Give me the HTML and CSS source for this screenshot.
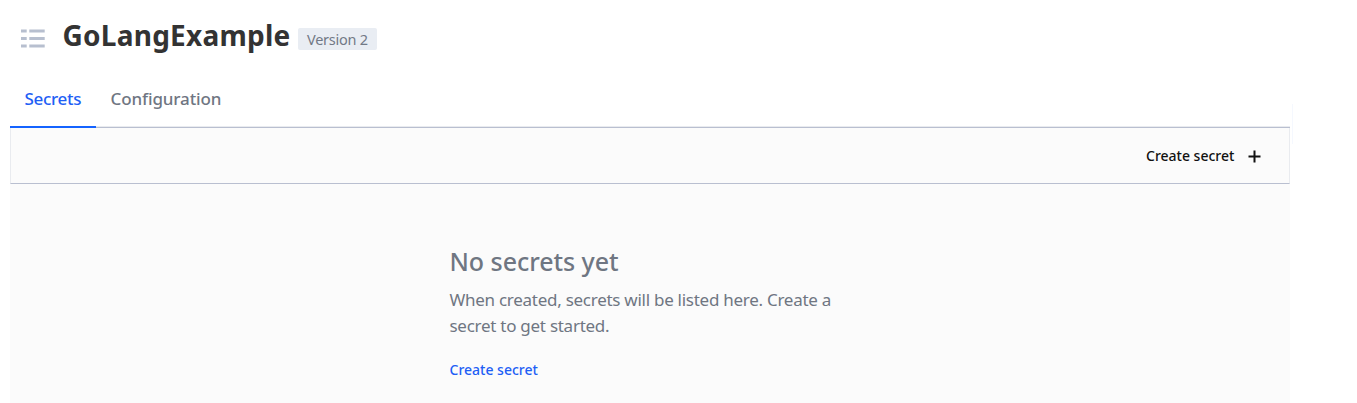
FILE: index.html
```html
<!DOCTYPE html>
<html lang="en">
<head>
<meta charset="utf-8">
<title>GoLangExample</title>
<link rel="stylesheet" href="styles.css">
</head>
<body>
<header class="header">
  <svg class="list-icon" width="24" height="19" viewBox="0 0 24 19" fill="#b7bfcf">
    <path d="M0 .5h5.700v3H0zM8.300 .5H23.700v3H8.300zM0 8h5.700v3H0zM8.300 8H23.700v3H8.300zM0 15.500h5.700v3H0zM8.300 15.500H23.700v3H8.300z"/>
  </svg>
  <h1 class="title">GoLangExample</h1>
  <span class="badge">Version 2</span>
</header>
<nav class="tabs">
  <a class="tab tab-active">Secrets</a>
  <a class="tab">Configuration</a>
  <span class="edge"></span>
</nav>
<main class="panel">
  <div class="toolbar">
    <button class="create"><span class="action">Create secret</span>
      <svg class="plus" width="13" height="13" viewBox="0 0 13 13" stroke="#111" stroke-width="2"><path d="M6.500 .5v12M.5 6.500h12"/></svg>
    </button>
  </div>
  <section class="empty">
    <h2 class="empty-title">No secrets yet</h2>
    <p class="empty-text">When created, secrets will be listed here. Create a<br>secret to get started.</p>
    <a class="link action">Create secret</a>
  </section>
</main>
</body>
</html>
```
FILE: styles.css
```css
* { box-sizing: border-box; }
body { margin: 0; height: 403px; overflow: hidden; background: #fff; color: #6f7682; font-family: "Noto Sans", "Open Sans", sans-serif; padding-left: 10px; }
.header { display: flex; height: 72px; }
.list-icon { margin: 29px 0 0 11px; }
.title { margin: 15px 0 0 17.500px; width: 227.500px; font-size: 28px; line-height: 40px; font-weight: 700; color: #333; white-space: nowrap; letter-spacing: 0.250px; }
.badge { margin: 28px 0 0 8px; width: 79px; height: 22px; padding-left: 9px; border-radius: 2px; background: #e9edf3; color: #727986; font-size: 14.500px; line-height: 23px; letter-spacing: -0.250px; white-space: nowrap; }
.tabs { display: flex; position: relative; width: 1280px; height: 56px; background: linear-gradient(#e9ebef, #e9ebef) 0 54px / 100% 1px no-repeat, linear-gradient(#b9bfd0, #b9bfd0) 0 55px / 100% 1px no-repeat; }
.tab { width: 86px; height: 56px; padding-left: 14.500px; font-size: 17px; line-height: 54px; font-weight: 500; letter-spacing: -0.120px; white-space: nowrap; }
.tab + .tab { width: 140px; }
.tab-active { color: #1f5ff5; border-bottom: 2px solid #1463ff; letter-spacing: -0.300px; }
.edge { position: absolute; left: 1282px; top: 32px; width: 1px; height: 40px; background: #f5f8fe; }
.panel { width: 1280px; height: 275px; background: #fbfbfb; }
.toolbar { display: flex; justify-content: flex-end; height: 56px; border: solid #e9ebef; border-width: 0 1px; border-bottom: 1px solid #b9bfd0; }
.create { display: flex; align-items: center; width: 115px; margin-right: 28px; padding: 0; border: 0; background: none; font-family: inherit; color: #111; justify-content: space-between; }
.plus { margin-top: 2px; }
.action { font-size: 14px; line-height: 20px; font-weight: 500; white-space: nowrap; }
.empty { margin-left: 439.500px; padding-top: 59px; width: 400px; }
.empty-title { margin: 0; font-size: 25px; line-height: 36px; font-weight: 500; letter-spacing: -0.050px; }
.empty-text { margin: 8px 0 21px; font-size: 17px; line-height: 26px; letter-spacing: -0.270px; white-space: nowrap; }
.link { display: block; color: #1f5ff5; }
```
